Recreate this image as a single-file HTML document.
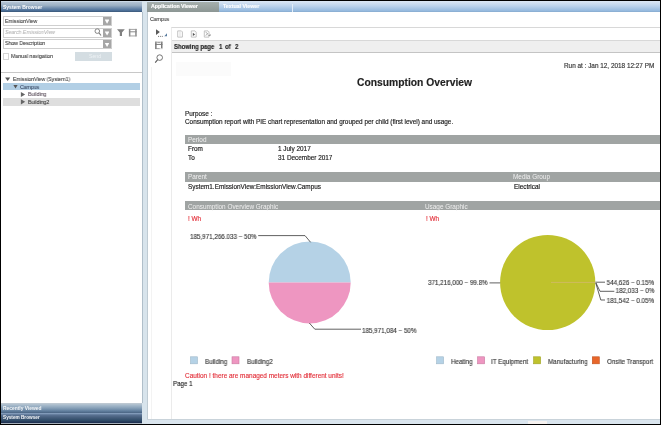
<!DOCTYPE html>
<html><head><meta charset="utf-8">
<style>
*{margin:0;padding:0;box-sizing:border-box}
html,body{width:661px;height:425px;overflow:hidden;background:#000;font-family:"Liberation Sans",sans-serif;}
.t{will-change:transform;-webkit-text-stroke:0.15px currentColor}
.a{position:absolute}
.t{position:absolute;white-space:nowrap;line-height:1}
#left{left:1px;top:1px;width:142px;height:423px;background:#fff;overflow:hidden}
.hdr{background:linear-gradient(#7f9dbf,#4d6c92);color:#fff;font-weight:bold}
.box{position:absolute;left:2px;width:109.4px;height:10px;border:0.6px solid #cfcfcf;background:#fff}
.ddb{position:absolute;right:0;top:0;width:8.6px;height:100%;background:#a6a6a6}
.ddb:after{content:"";position:absolute;left:1.9px;top:2.6px;width:4.8px;height:4.2px;background:#fff;clip-path:polygon(0 0,100% 0,50% 100%)}
.lt{font-size:5.7px;color:#2a2a2a;-webkit-text-stroke:0.05px currentColor;transform:scaleX(0.91);transform-origin:0 0}
#div{left:142.4px;top:1px;width:5.2px;height:422.5px;background:#d8e4ec}
#right{left:147px;top:1px;width:513px;height:418px;background:#fff;overflow:hidden}
.bar{position:absolute;background:#a0a4a3;height:9.4px;color:#f4f4f4;font-size:6.4px}
.r{font-size:6.4px;color:#1a1a1a}
.red{color:#e3343e}
.c{font-size:7px;color:#3a3a3a;transform:scaleX(0.893);transform-origin:0 0}
.cr{transform-origin:100% 0}
</style></head><body>

<!-- LEFT PANEL -->
<div id="left" class="a">
  <div class="a" style="left:0;top:0;width:142px;height:11px;background:linear-gradient(#dce8f4 0%,#b2c2d2 12%,#9cb0c4 40%,#6f8cad 65%,#4a6d96 88%,#3a5676 100%)"></div>
  <div class="t" style="left:1.5px;top:3.5px;font-size:5px;color:#fff;font-weight:bold;-webkit-text-stroke:0">System Browser</div>

  <div class="box" style="top:14.9px"><div class="ddb"></div></div>
  <div class="t lt" style="left:4px;top:17.6px">EmissionView</div>

  <div class="box" style="top:26.8px"><div class="ddb"></div></div>
  <div class="t lt" style="left:4.4px;top:28.8px;color:#b0b0b0;font-style:italic">Search EmissionView</div>

  <div class="box" style="top:38.1px"><div class="ddb"></div></div>
  <div class="t lt" style="left:4px;top:40.3px">Show Description</div>

  <div class="a" style="left:2.2px;top:51.9px;width:6px;height:6.8px;border:0.9px solid #d4d4d4;background:#fff"></div>
  <div class="t lt" style="left:10.1px;top:53px">Manual navigation</div>
  <div class="a" style="left:74.4px;top:50.7px;width:37px;height:9.3px;background:#d4dde2"></div>
  <div class="t" style="left:88px;top:53.3px;font-size:5.2px;color:#eef2f5;-webkit-text-stroke:0">Send</div>

  <div class="a" style="left:0;top:70.6px;width:142px;height:1px;background:#c8c8c8"></div>

  <div class="a" style="left:2px;top:82.2px;width:137px;height:7.2px;background:#b2cfe5"></div>
  <div class="a" style="left:2px;top:97.2px;width:136.6px;height:7.6px;background:#dedede"></div>
  <div class="t lt" style="left:11.6px;top:76px">EmissionView (System1)</div>
  <div class="t lt" style="left:19.3px;top:83.8px;color:#2e3c58">Campus</div>
  <div class="t lt" style="left:26.6px;top:91px;color:#4a3c4a">Building</div>
  <div class="t lt" style="left:26.6px;top:98.6px">Building2</div>

  <div class="a" style="left:0;top:401.8px;width:142px;height:10.1px;background:linear-gradient(#c4ccd4 0%,#a9bccc 20%,#87a0b8 50%,#617f9e 80%,#4a6482 100%)"></div>
  <div class="t" style="left:2.2px;top:405.8px;font-size:4.9px;color:#f4f6f8;font-weight:bold;-webkit-text-stroke:0">Recently Viewed</div>
  <div class="a" style="left:0;top:411.9px;width:142px;height:9.9px;background:linear-gradient(#8ea7c6 0%,#5a7292 20%,#465e7c 45%,#2e4a66 75%,#1c2c4e 100%)"></div><div class="a" style="left:0;top:421.8px;width:142px;height:1.2px;background:#a4aeb8"></div>
  <div class="t" style="left:2.2px;top:415.2px;font-size:4.7px;color:#f4f6f8;font-weight:bold;-webkit-text-stroke:0">System Browser</div>
</div>

<div id="div" class="a"></div>
<div class="a" style="left:141.9px;top:12px;width:0.8px;height:391px;background:#b0bfca"></div>
<div class="a" style="left:147.2px;top:12px;width:0.9px;height:407px;background:#bfcbd3;z-index:3"></div>

<!-- RIGHT PANEL -->
<div id="right" class="a">
  <div class="a" style="left:0;top:0;width:513px;height:11px;background:linear-gradient(#dce8f5 0%,#bcd3ec 45%,#94b9de 90%,#86a9cc 100%)"></div>
  <div class="a" style="left:0;top:1.2px;width:72.4px;height:9.6px;background:linear-gradient(#a6b0ae,#8c9694)"></div>
  <div class="t" style="left:3.9px;top:3px;font-size:5.25px;color:#fff;font-weight:bold">Application Viewer</div>
  <div class="t" style="left:76.4px;top:3px;font-size:5.25px;color:#fafcff;font-weight:bold">Textual Viewer</div>
  <div class="a" style="left:144.6px;top:2.5px;width:1px;height:8px;background:#e2edf8"></div>

  <div class="t lt" style="left:2.8px;top:15.6px">Campus</div>

  <!-- report frame -->
  <div class="a" style="left:3.8px;top:66px;width:0.8px;height:352px;background:#f3f3f3"></div>
  <div class="a" style="left:24px;top:26.3px;width:489px;height:392px;border-left:1px solid #ebebeb;border-top:1px solid #d8d8d8"></div>
  <div class="a" style="left:25px;top:38.5px;width:488px;height:13.5px;background:#efefef;border-top:1px solid #d8d8d8;border-bottom:1.2px solid #c4c4c4"></div>
  <div class="t" style="left:26.7px;top:42.8px;font-size:6.6px;font-weight:bold;color:#222;transform:scaleX(0.9);transform-origin:0 0">Showing page</div>
  <div class="t" style="left:71.6px;top:42.8px;font-size:6.6px;font-weight:bold;color:#222;transform:scaleX(0.9);transform-origin:0 0">1</div>
  <div class="t" style="left:78.4px;top:42.8px;font-size:6.6px;font-weight:bold;color:#222;transform:scaleX(0.9);transform-origin:0 0">of</div>
  <div class="t" style="left:87.9px;top:42.8px;font-size:6.6px;font-weight:bold;color:#222;transform:scaleX(0.9);transform-origin:0 0">2</div>

  <!-- report contents -->
  <div class="a" style="left:29px;top:60.7px;width:54.5px;height:14px;background:#fbfbfb"></div>
  <div class="t" style="left:416.8px;top:61.5px;font-size:6.4px;color:#333">Run at : Jan 12, 2018 12:27 PM</div>
  <div class="t" style="left:210px;top:76.5px;font-size:10.3px;font-weight:bold;color:#222">Consumption Overview</div>
  <div class="t r" style="left:37.8px;top:109.5px">Purpose :</div>
  <div class="t r" style="left:37.8px;top:118.1px">Consumption report with PIE chart representation and grouped per child (first level) and usage.</div>

  <div class="bar" style="left:37.5px;top:133.6px;width:480px"></div>
  <div class="t" style="left:40.9px;top:135.5px;font-size:6.4px;color:#f0f0f0;-webkit-text-stroke:0">Period</div>
  <div class="t r" style="left:41.4px;top:145.2px">From</div>
  <div class="t r" style="left:131.3px;top:145.2px">1 July 2017</div>
  <div class="t r" style="left:41.4px;top:153.5px">To</div>
  <div class="t r" style="left:131.3px;top:153.5px">31 December 2017</div>

  <div class="bar" style="left:37.5px;top:171.4px;width:480px"></div>
  <div class="t" style="left:40.9px;top:173.3px;font-size:6.4px;color:#f0f0f0;-webkit-text-stroke:0">Parent</div>
  <div class="t" style="left:366.4px;top:173.3px;font-size:6.4px;color:#f0f0f0;-webkit-text-stroke:0">Media Group</div>
  <div class="t r" style="left:41.4px;top:182.5px">System1.EmissionView:EmissionView.Campus</div>
  <div class="t r" style="left:367px;top:183px;color:#111">Electrical</div>

  <div class="bar" style="left:37.5px;top:200.1px;width:480px"></div>
  <div class="t" style="left:40.9px;top:202.9px;font-size:6.4px;color:#f0f0f0;-webkit-text-stroke:0">Consumption Overview Graphic</div>
  <div class="t" style="left:278.3px;top:202.9px;font-size:6.4px;color:#f0f0f0;-webkit-text-stroke:0">Usage Graphic</div>
  <div class="t r red" style="left:40.9px;top:214.7px">! Wh</div>
  <div class="t r red" style="left:279px;top:214.7px">! Wh</div>
</div>

<!-- bottom band -->
<div class="a" style="left:528px;top:420.5px;width:19px;height:3px;background:#f6f2f0;z-index:2"></div>
<div class="a" style="left:147px;top:419px;width:513px;height:4.5px;background:#dae5ee;border-top:1px solid #c9d3da"></div>


<!-- CHARTS & ICONS overlay (page coords) -->
<svg class="a" style="left:0;top:0" width="661" height="425" viewBox="0 0 661 425">
  <!-- tree triangles -->
  <path d="M5.1 77.4 L10.2 77.4 L7.65 81 Z" fill="#555"/>
  <path d="M13.4 85.1 L17.6 85.1 L15.5 88.5 Z" fill="#555"/>
  <path d="M20.9 91.9 L25.2 94.45 L20.9 97 Z" fill="#666"/>
  <path d="M20.9 99.2 L25.2 101.8 L20.9 104.4 Z" fill="#666"/>
  <!-- search magnifier in box -->
  <circle cx="97.3" cy="31.1" r="2.3" fill="none" stroke="#7c7c7c" stroke-width="0.95"/>
  <path d="M99 32.9 L101 35.5" stroke="#7c7c7c" stroke-width="1.05"/>
  <!-- funnel -->
  <path d="M117 29.3 L124.8 29.3 L122 32.6 L122 36 L119.8 36 L119.8 32.6 Z" fill="#808080"/>
  <!-- save left -->
  <rect x="128.9" y="28.9" width="1.5" height="7.4" fill="#8a8a8a"/>
  <rect x="135.2" y="28.9" width="1.5" height="7.4" fill="#8a8a8a"/>
  <rect x="128.9" y="28.9" width="7.8" height="0.9" fill="#9a9a9a"/>
  <rect x="128.9" y="31.3" width="7.8" height="1" fill="#8a8a8a"/>
  <rect x="128.9" y="35.5" width="7.8" height="0.9" fill="#9a9a9a"/>
  <!-- app viewer toolbar icons -->
  <path d="M156 29.2 L159.9 32 L156 34.9 Z" fill="#5a5a5a"/>
  <path d="M158 36.4 H159 M159.9 36.4 H160.9 M161.8 36.4 H162.8" stroke="#6a6a6a" stroke-width="0.9"/>
  <path d="M164.3 36.2 L167 33.2 L167 36.2 Z" fill="#587b9e"/>
  <rect x="155.1" y="41.7" width="1.5" height="7.3" fill="#7a7a7a"/>
  <rect x="161" y="41.7" width="1.5" height="6.6" fill="#7a7a7a"/>
  <rect x="155.1" y="41.7" width="7.4" height="0.8" fill="#999"/>
  <rect x="157.5" y="42.1" width="2.6" height="0.6" fill="#888"/>
  <rect x="155.1" y="43.9" width="7.4" height="1" fill="#7a7a7a"/>
  <rect x="155.1" y="48.3" width="4.6" height="0.8" fill="#8a8a8a"/>
  <path d="M159.7 48.7 H162.6" stroke="#aaa" stroke-width="0.7" stroke-dasharray="0.8 0.4"/>
  <circle cx="159.7" cy="57.6" r="2.8" fill="none" stroke="#666" stroke-width="0.9"/>
  <path d="M157.7 59.7 L155.2 62.6" stroke="#555" stroke-width="1.1"/>
  <!-- report toolbar icons -->
  <path d="M177.7 30.9 H181.4 L182.4 31.9 V37.1 H177.7 Z" fill="none" stroke="#b4b4b4" stroke-width="0.8"/>
  <path d="M180 31.5 V36.5" stroke="#d0d0d0" stroke-width="0.7"/>
  <path d="M191.3 30.9 H195 L196.2 32.1 V37.1 H191.3 Z" fill="none" stroke="#b4b4b4" stroke-width="0.8"/>
  <path d="M192.8 32.8 L195.1 34.5 L192.8 36.1 Z" fill="#555"/>
  <path d="M204.3 30.9 H208 L209 31.9 V37.1 H204.3 Z" fill="none" stroke="#b4b4b4" stroke-width="0.8"/>
  <path d="M205.6 32.2 L207.8 33.8 L205.6 35.4" fill="none" stroke="#888" stroke-width="0.7"/>
  <path d="M207.5 36 L210.5 34.3 L210.8 35.6 Z" fill="#777"/>

  <!-- pie 1 -->
  <path d="M268.7 282.4 A41 41 0 0 1 350.7 282.4 Z" fill="#b5d2e6"/>
  <path d="M268.7 282.4 A41 41 0 0 0 350.7 282.4 Z" fill="#ee96c1"/>
  <polyline points="258.2,235.6 305,235.6 310.6,242.3" fill="none" stroke="#444" stroke-width="0.85"/>
  <polyline points="309.3,323 314.8,329.2 361,329.2" fill="none" stroke="#444" stroke-width="0.85"/>
  <!-- pie 2 -->
  <circle cx="547.7" cy="282.5" r="47.6" fill="#bfc22c"/>
  <path d="M551 282.4 L595.3 282.4" stroke="#dcb48a" stroke-width="0.55"/>
  <path d="M489.5 282.9 H500.2" stroke="#444" stroke-width="0.85"/>
  <polyline points="595.4,282.2 605,282.2" fill="none" stroke="#444" stroke-width="0.85"/>
  <polyline points="596,283 600,291.3 614.3,291.3" fill="none" stroke="#444" stroke-width="0.85"/>
  <polyline points="595.8,283 600.8,300 605,300" fill="none" stroke="#444" stroke-width="0.85"/>

  <!-- legends -->
  <rect x="190.5" y="356.8" width="7" height="7" fill="#b5d2e6" stroke="#9fb8c9" stroke-width="0.6"/>
  <rect x="232" y="356.8" width="7" height="7" fill="#ee96c1" stroke="#c97aa0" stroke-width="0.6"/>
  <rect x="436.6" y="356.8" width="7" height="7" fill="#b5d2e6" stroke="#9fb8c9" stroke-width="0.6"/>
  <rect x="477.6" y="356.8" width="7" height="7" fill="#ee96c1" stroke="#c97aa0" stroke-width="0.6"/>
  <rect x="533.6" y="356.8" width="7" height="7" fill="#bfc22c" stroke="#9fa224" stroke-width="0.6"/>
  <rect x="592.3" y="356.8" width="7" height="7" fill="#e8662a" stroke="#c0521f" stroke-width="0.6"/>
</svg>
<div class="t c" style="left:190.1px;top:232.5px;">185,971,266.033 ~ 50%</div>
<div class="t c" style="left:362px;top:326.5px;">185,971,084 ~ 50%</div>
<div class="t c" style="left:428.2px;top:279.2px;">371,216,000 ~ 99.8%</div>
<div class="t c cr" style="right:6.9px;top:278.7px;">544,626 ~ 0.15%</div>
<div class="t c cr" style="right:6.9px;top:287.4px;">182,033 ~ 0%</div>
<div class="t c cr" style="right:6.9px;top:296.8px;">181,542 ~ 0.05%</div>
<div class="t c" style="left:205px;top:357.5px;">Building</div>
<div class="t c" style="left:246.6px;top:357.5px;">Building2</div>
<div class="t c" style="left:451px;top:357.5px;">Heating</div>
<div class="t c" style="left:491px;top:357.5px;">IT Equipment</div>
<div class="t c" style="left:547.6px;top:357.5px;">Manufacturing</div>
<div class="t c" style="left:606.7px;top:357.5px;">Onsite Transport</div>
<div class="t" style="left:184.5px;top:373px;color:#e3343e;font-size:6.45px">Caution ! there are managed meters with different units!</div>
<div class="t" style="left:172.9px;top:380.2px;color:#222;font-size:7px;transform:scaleX(0.88);transform-origin:0 0">Page 1</div>

</body></html>
